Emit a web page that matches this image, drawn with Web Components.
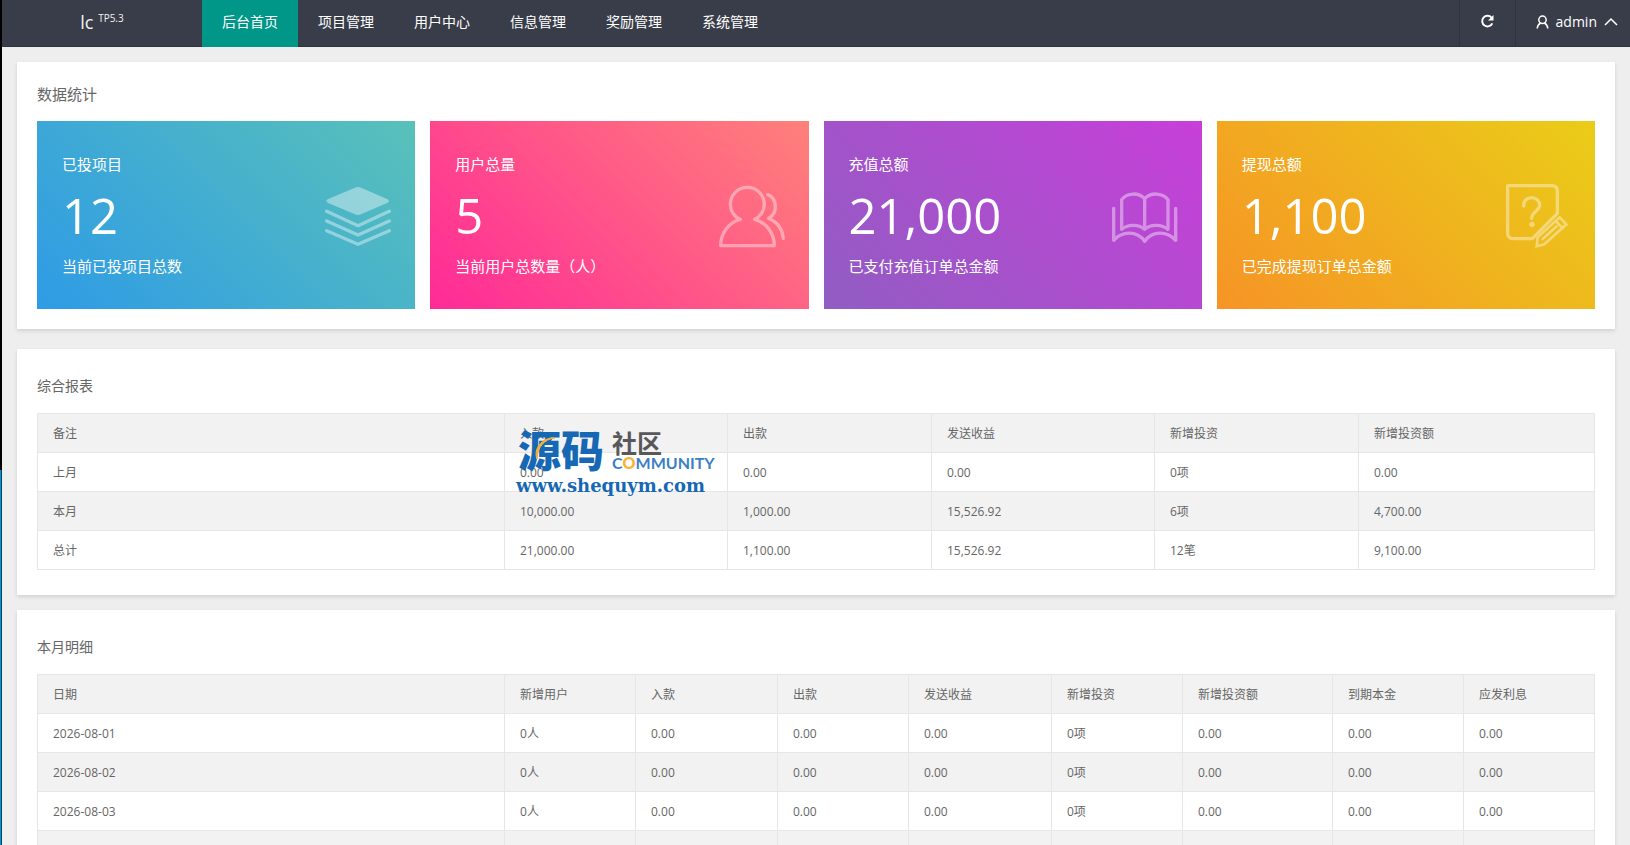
<!DOCTYPE html>
<html lang="zh-CN">
<head>
<meta charset="utf-8">
<title>后台首页</title>
<style>
  html, body {
    height: 100%;
  }

  body {
    margin: 0;
    display: flex;
    background: linear-gradient(90deg, #0094d6 1px, #0b3f5c 1px, #0b3f5c 2px, #eee 2px);
    color: #666;
    font: 14px/24px "Open Sans", "Noto Sans CJK SC", sans-serif;
  }

  admin-app {
    flex: 1;
  }
</style>
</head>
<body>
  <edge-strip></edge-strip>
  <admin-app>
    <top-bar slot="header" user="admin">
      <nav-item active>后台首页</nav-item>
      <nav-item>项目管理</nav-item>
      <nav-item>用户中心</nav-item>
      <nav-item>信息管理</nav-item>
      <nav-item>奖励管理</nav-item>
      <nav-item>系统管理</nav-item>
    </top-bar>

    <admin-panel class="stats" large>
      <span slot="title">数据统计</span>
      <stat-row>
        <stat-card theme="blue" icon="layers" value="12">
          <span slot="label">已投项目</span>当前已投项目总数
        </stat-card>
        <stat-card theme="pink" icon="users" value="5">
          <span slot="label">用户总量</span>当前用户总数量（人）
        </stat-card>
        <stat-card theme="purple" icon="book" value="21,000">
          <span slot="label">充值总额</span>已支付充值订单总金额
        </stat-card>
        <stat-card theme="orange" icon="note" value="1,100">
          <span slot="label">提现总额</span>已完成提现订单总金额
        </stat-card>
      </stat-row>
    </admin-panel>

    <admin-panel>
      <span slot="title">综合报表</span>
      <data-table id="report" label="综合报表"></data-table>
      <site-mark slot="overlay"></site-mark>
    </admin-panel>

    <admin-panel>
      <span slot="title">本月明细</span>
      <data-table id="detail" label="本月明细"></data-table>
    </admin-panel>
  </admin-app>

<script>
  // sliver of the window behind, on the left edge
  class EdgeStrip extends HTMLElement {
    constructor() {
      super();
      this.attachShadow({ mode: "open" }).innerHTML = `
        <style>
          :host {
            display: block;
            flex: none;
            width: 2px;
          }
          div {
            height: 470px;
            background: #000;
          }
        </style>
        <div></div>
      `;
    }
  }

  // page shell: header on top, scrolling content below
  class AdminApp extends HTMLElement {
    constructor() {
      super();
      this.attachShadow({ mode: "open" }).innerHTML = `
        <style>
          :host {
            display: flex;
            flex-direction: column;
            min-width: 0;
            height: 100vh;
            background: #eee;
          }
          main {
            flex: 1;
            min-height: 0;
            overflow-y: auto;
            scrollbar-width: none;
            padding: 15px;
            box-sizing: border-box;
          }
          ::slotted(admin-panel) {
            margin-bottom: 15px;
          }
          ::slotted(.stats) {
            margin-bottom: 20px;
          }
        </style>
        <slot name="header"></slot>
        <main><slot></slot></main>
      `;
    }
  }

  class TopBar extends HTMLElement {
    constructor() {
      super();
      this.attachShadow({ mode: "open" }).innerHTML = `
        <style>
          :host {
            display: flex;
            flex: none;
            height: 47px;
            background: #393d49;
            box-shadow: inset 0 -1px #30333d;
            color: #fff;
            line-height: 44px;
          }
          .logo {
            width: 200px;
            color: #f2f2f2;
            font-size: 18px;
            text-align: center;
            text-decoration: none;
          }
          .logo sup {
            font-size: 10px;
            line-height: 0;
          }
          nav {
            display: flex;
            flex: 1;
          }
          button {
            display: flex;
            align-items: center;
            height: 47px;
            padding: 0 20px 4px;
            border: 0;
            border-left: 1px solid #30333d;
            background: none;
            color: inherit;
            font: inherit;
            cursor: pointer;
          }
          .user {
            gap: 7px;
            padding-right: 12px;
          }
          svg {
            display: block;
            fill: none;
            stroke: #fff;
          }
        </style>
        <a class="logo" href="#">lc <sup>TP5.3</sup></a>
        <nav><slot></slot></nav>
        <button class="refresh" type="button" aria-label="刷新">
          <svg width="15" height="15" viewBox="0 0 15 15" stroke-width="2">
            <path d="M11.5 3.6A5.3 5.3 0 1 0 12.3 9.3"/>
            <path d="M13.5 1v5.5H8Z" fill="#fff" stroke="none"/>
          </svg>
        </button>
        <button class="user" type="button">
          <svg width="13" height="14" viewBox="0 0 13 14" stroke-width="1.5">
            <circle cx="6.5" cy="4.8" r="3.7"/>
            <path d="M1.2 13.5C1.4 10.8 2.6 9 4.6 8M11.8 13.5C11.6 10.8 10.4 9 8.4 8"/>
          </svg>
          <span></span>
          <svg width="14" height="14" viewBox="0 0 14 14" stroke-width="1.5">
            <path d="M1 10 7 4l6 6"/>
          </svg>
        </button>
      `;
    }

    connectedCallback() {
      this.shadowRoot.querySelector(".user span").textContent = this.getAttribute("user");
    }
  }

  class NavItem extends HTMLElement {
    constructor() {
      super();
      this.attachShadow({ mode: "open" }).innerHTML = `
        <style>
          :host {
            display: block;
          }
          a {
            display: block;
            height: 47px;
            padding: 0 20px;
            color: #fff;
            text-decoration: none;
            white-space: nowrap;
          }
          :host([active]) a {
            background: #009688;
          }
        </style>
        <a href="#"><slot></slot></a>
      `;
    }
  }

  // white card with a title
  class AdminPanel extends HTMLElement {
    constructor() {
      super();
      this.attachShadow({ mode: "open" }).innerHTML = `
        <style>
          :host {
            display: block;
            position: relative;
            padding: 24px 20px 25px;
            background: #fff;
            box-shadow: 0 2px 4px rgba(0, 0, 0, .12);
          }
          :host([large]) {
            padding: 20px;
          }
          h2 {
            margin: 0 0 15px;
            font-size: 14px;
            font-weight: 400;
            line-height: 25px;
          }
          :host([large]) h2 {
            margin-bottom: 14px;
            font-size: 15px;
          }
        </style>
        <h2><slot name="title"></slot></h2>
        <slot></slot>
        <slot name="overlay"></slot>
      `;
    }
  }

  class StatRow extends HTMLElement {
    constructor() {
      super();
      this.attachShadow({ mode: "open" }).innerHTML = `
        <style>
          :host {
            display: grid;
            grid-template-columns: repeat(4, 1fr);
            gap: 15px;
          }
        </style>
        <slot></slot>
      `;
    }
  }

  const statIcons = {
    layers: `
      <path d="M90 14Q99 10 108 14L188 49Q195 54 188 59L108 94Q99 98 90 94L8 59Q1 54 8 49Z" fill="#fff" stroke="none"/>
      <path d="M5 85 99 128 193 85M5 114 99 156 193 114M5 143 99 184 193 143"/>`,
    users: `
      <path d="M61 109H64C46 102 34 84 34 64A51 51 0 0 1 136 64C136 84 124 102 107 109C141 118 166 150 166 188H5C5 150 30 118 64 109"/>
      <path d="M146 35C160 40 169 54 169 72C169 88 161 99 149 106C174 117 190 136 193 166"/>`,
    book: `
      <path d="M5 76V172C30 144 75 142 98 175C121 142 166 144 191 172V76"/>
      <path d="M29 139V50C45 28 80 28 98 47C116 28 151 28 168 50V139C150 125 118 122 98 139C78 122 46 125 29 139M98 47V139"/>`,
    note: `
      <path d="M8 8H140Q157 8 157 25V91L82 167H25Q8 167 8 150Z"/>
      <path d="M56 69C56 52 66 44 80 44C94 44 104 54 104 67C104 84 80 86 80 106"/>
      <circle cx="81" cy="124" r="8" fill="#fff" stroke="none"/>
      <path d="M98 163 164 103 184 124 118 184 95 190ZM152 114 173 136M155 130 113 168" stroke-width="8" stroke-linejoin="miter"/>`
  };

  class StatCard extends HTMLElement {
    constructor() {
      super();
      this.attachShadow({ mode: "open" }).innerHTML = `
        <style>
          :host {
            display: flex;
            align-items: center;
            justify-content: space-between;
            padding: 31px 24px 31px 25px;
            color: #fff;
            font-size: 15px;
            background: linear-gradient(45deg, var(--from), var(--to));
          }
          :host([theme="blue"]) { --from: #2e9be6; --to: #59c1b9; }
          :host([theme="pink"]) { --from: #ff2a97; --to: #ff817a; }
          :host([theme="purple"]) { --from: #905dc2; --to: #c83fd9; }
          :host([theme="orange"]) { --from: #f69426; --to: #eacd18; }
          .value {
            font-size: 49px;
            line-height: 78px;
          }
          svg {
            flex: none;
            width: 66px;
            height: 66px;
            margin-top: 2px;
            overflow: visible;
            opacity: .4;
            fill: none;
            stroke: #fff;
            stroke-width: 10;
            stroke-linecap: round;
            stroke-linejoin: round;
          }
        </style>
        <div>
          <div><slot name="label"></slot></div>
          <div class="value"></div>
          <div><slot></slot></div>
        </div>
        <svg viewBox="0 0 198 198" aria-hidden="true"></svg>
      `;
    }

    connectedCallback() {
      this.shadowRoot.querySelector(".value").textContent = this.getAttribute("value");
      this.shadowRoot.querySelector("svg").innerHTML = statIcons[this.getAttribute("icon")];
    }
  }

  // striped table, column widths are shares of the full width
  class DataTable extends HTMLElement {
    constructor() {
      super();
      this.attachShadow({ mode: "open" }).innerHTML = `
        <style>
          :host {
            display: block;
          }
          table {
            width: 100%;
            table-layout: fixed;
            border-collapse: collapse;
            font-size: 12px;
            line-height: 20px;
          }
          th, td {
            padding: 10px 15px 8px;
            border: 1px solid #e6e6e6;
            font-weight: 400;
            text-align: left;
            white-space: nowrap;
          }
          thead tr, tbody tr:nth-child(even) {
            background: #f2f2f2;
          }
        </style>
        <table>
          <colgroup></colgroup>
          <thead></thead>
          <tbody></tbody>
        </table>
      `;
    }

    setData(columns, rows) {
      const root = this.shadowRoot;
      const total = columns.reduce((sum, col) => sum + col[1], 0);
      root.querySelector("table").setAttribute("aria-label", this.getAttribute("label"));
      root.querySelector("colgroup").innerHTML = columns
        .map((col) => `<col style="width: ${(col[1] / total) * 100}%">`).join("");
      root.querySelector("thead").innerHTML =
        "<tr>" + columns.map((col) => `<th scope="col">${col[0]}</th>`).join("") + "</tr>";
      root.querySelector("tbody").innerHTML = rows
        .map((row) => "<tr>" + row.map((cell) => `<td>${cell}</td>`).join("") + "</tr>").join("");
    }
  }

  // community logo floating over the report
  class SiteMark extends HTMLElement {
    constructor() {
      super();
      this.attachShadow({ mode: "open" }).innerHTML = `
        <style>
          :host {
            position: absolute;
            top: 78px;
            left: 499px;
            color: #1668b4;
            white-space: nowrap;
            pointer-events: none;
          }
          .top {
            display: flex;
            gap: 8px;
            padding-left: 2px;
          }
          .name {
            font-size: 43px;
            font-weight: 900;
            line-height: 48px;
          }
          .side {
            padding-top: 3px;
          }
          .cn {
            color: #58585a;
            font-size: 25px;
            font-weight: 700;
            line-height: 26px;
          }
          .en {
            color: #3c7fc4;
            font-size: 16px;
            font-family: Lato, sans-serif;
            font-weight: 700;
            line-height: 14px;
          }
          .en b {
            color: #f9b233;
          }
          .url {
            font: 700 18px/22px "DejaVu Serif", serif;
          }
          svg {
            position: absolute;
            top: 9px;
            left: 18px;
          }
        </style>
        <div class="top">
          <div class="name">源码</div>
          <div class="side">
            <div class="cn">社区</div>
            <div class="en">C<b>O</b>MMUNITY</div>
          </div>
        </div>
        <div class="url">www.shequym.com</div>
        <svg width="22" height="24" viewBox="0 0 22 24" aria-hidden="true">
          <path d="M3 23C-1 13 8 1 21 2C10 3 3 12 3 23Z" fill="#f9b233" stroke="#f9b233"/>
        </svg>
      `;
    }
  }

  customElements.define("edge-strip", EdgeStrip);
  customElements.define("admin-app", AdminApp);
  customElements.define("top-bar", TopBar);
  customElements.define("nav-item", NavItem);
  customElements.define("admin-panel", AdminPanel);
  customElements.define("stat-row", StatRow);
  customElements.define("stat-card", StatCard);
  customElements.define("data-table", DataTable);
  customElements.define("site-mark", SiteMark);

  document.querySelector("#report").setData(
    [["备注", 467], ["入款", 223], ["出款", 204], ["发送收益", 223], ["新增投资", 204], ["新增投资额", 236]],
    [
      ["上月", "0.00", "0.00", "0.00", "0项", "0.00"],
      ["本月", "10,000.00", "1,000.00", "15,526.92", "6项", "4,700.00"],
      ["总计", "21,000.00", "1,100.00", "15,526.92", "12笔", "9,100.00"]
    ]
  );

  const days = ["2026-08-01", "2026-08-02", "2026-08-03"];
  document.querySelector("#detail").setData(
    [["日期", 467], ["新增用户", 131], ["入款", 142], ["出款", 131], ["发送收益", 143],
      ["新增投资", 131], ["新增投资额", 150], ["到期本金", 131], ["应发利息", 131]],
    days.map((day) => [day, "0人", "0.00", "0.00", "0.00", "0项", "0.00", "0.00", "0.00"])
      .concat([Array(9).fill("&nbsp;")])
  );
</script>
</body>
</html>
